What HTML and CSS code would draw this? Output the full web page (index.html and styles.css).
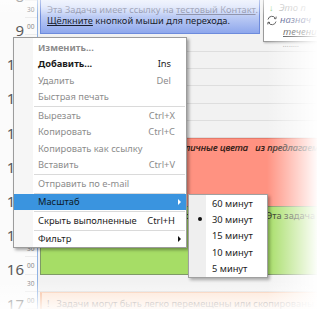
FILE: index.html
```html
<!DOCTYPE html>
<html lang="ru">
<head>
<meta charset="utf-8">
<title>Планировщик</title>
<link rel="stylesheet" href="styles.css">
</head>
<body>
<div class="screen">
  <div class="sched">
    <div class="times">
      <div class="hour"><div class="hr">8</div><div class="mn">00</div><div class="mn">30</div></div>
      <div class="hour"><div class="hr">9</div><div class="mn">00</div><div class="mn">30</div></div>
      <div class="hour"><div class="hr">10</div><div class="mn">00</div><div class="mn">30</div></div>
      <div class="hour"><div class="hr">11</div><div class="mn">00</div><div class="mn">30</div></div>
      <div class="hour"><div class="hr">12</div><div class="mn">00</div><div class="mn">30</div></div>
      <div class="hour"><div class="hr">13</div><div class="mn">00</div><div class="mn">30</div></div>
      <div class="hour"><div class="hr">14</div><div class="mn">00</div><div class="mn">30</div></div>
      <div class="hour"><div class="hr">15</div><div class="mn">00</div><div class="mn">30</div></div>
      <div class="hour"><div class="hr">16</div><div class="mn">00</div><div class="mn">30</div></div>
      <div class="hour"><div class="hr">17</div><div class="mn">00</div><div class="mn">30</div></div>
    </div>
    <div class="vline"></div>
    <div class="day">
      <div class="slot"></div><div class="slot"></div><div class="slot"></div><div class="slot"></div>
      <div class="slot"></div><div class="slot"></div><div class="slot"></div><div class="slot"></div>
      <div class="slot"></div><div class="slot"></div><div class="slot"></div><div class="slot"></div>
      <div class="slot"></div><div class="slot"></div><div class="slot"></div><div class="slot"></div>
      <div class="slot"></div><div class="slot"></div><div class="slot"></div><div class="slot"></div>

      <div class="ev ev-blue">
        <div class="faint">Эта Задача имеет ссылку на <u>тестовый Контакт</u>.</div>
        <div class="dark"><u>Щёлкните</u> кнопкой мыши для перехода.</div>
      </div>
      <div class="ev ev-red">Задачам можно назначать различные цвета &nbsp;&nbsp;из предлагаемых</div>
      <div class="ev ev-green">Задачи можно группировать по их категориям.&nbsp; Эта задача относится к категории</div>
      <div class="ev ev-orange"><span class="excl">!</span>Задачи могут быть легко перемещены или скопированы</div>
    </div>
  </div>

  <div class="card">
    <div class="card-row"><span class="down">↓</span><span class="c-faint">Это п</span></div>
    <div class="card-row"><svg class="recur" width="12" height="11" viewBox="0 0 12 11"><path d="M2 4.5 A4 4 0 0 1 9.5 3.5" fill="none" stroke="#555" stroke-width="1"/><path d="M10 6.5 A4 4 0 0 1 2.5 7.5" fill="none" stroke="#555" stroke-width="1"/><path d="M8 3.5 L10 3.8 L10.2 1.6" fill="none" stroke="#555" stroke-width="1"/><path d="M4 7.5 L2 7.2 L1.8 9.4" fill="none" stroke="#555" stroke-width="1"/></svg><span class="c-blue">назнач</span></div>
    <div class="card-row indent"><span class="c-dark">течени</span></div>
    <div class="card-row indent"><span class="c-dots">........</span></div>
  </div>

  <div class="menu">
    <div class="mi b dis">Изменить...</div>
    <div class="mi b">Добавить...<span class="sc sc-short">Ins</span></div>
    <div class="mi dis">Удалить<span class="sc sc-short">Del</span></div>
    <div class="mi dis">Быстрая печать</div>
    <div class="sep"></div>
    <div class="mi dis">Вырезать<span class="sc">Ctrl+X</span></div>
    <div class="mi dis">Копировать<span class="sc">Ctrl+C</span></div>
    <div class="mi dis">Копировать как ссылку</div>
    <div class="mi dis">Вставить<span class="sc">Ctrl+V</span></div>
    <div class="sep"></div>
    <div class="mi dis">Отправить по e-mail</div>
    <div class="sep"></div>
    <div class="mi hl">Масштаб<span class="arrow arrow-w"></span></div>
    <div class="sep"></div>
    <div class="mi">Скрыть выполненные<span class="sc">Ctrl+H</span></div>
    <div class="sep"></div>
    <div class="mi">Фильтр<span class="arrow"></span></div>
  </div>

  <div class="submenu">
    <div class="si">60 минут</div>
    <div class="si"><span class="bullet"></span>30 минут</div>
    <div class="si">15 минут</div>
    <div class="si">10 минут</div>
    <div class="si">5 минут</div>
  </div>

  <div class="fade fade-top"></div>
  <div class="fade fade-right"></div>
  <div class="fade fade-bottom"></div>
</div>
</body>
</html>
```

FILE: styles.css
```css
html, body {
  margin: 0;
  padding: 0;
  background: #fff;
}
.screen {
  position: relative;
  width: 317px;
  height: 309px;
  overflow: hidden;
  font-family: "Noto Sans", "Open Sans", sans-serif;
  background: #f2f2f2;
}
.sched {
  display: flex;
  margin-top: -16.1px;
}
.times {
  width: 37px;
  flex: none;
  background: #fbfbfb;
  display: flex;
  flex-direction: column;
}
.hour {
  height: 34.2px;
  display: grid;
  grid-template-columns: 25px 12px;
  grid-template-rows: 17.1px 17.1px;
}
.hr {
  grid-row: 1 / 3;
  grid-column: 1;
  text-align: right;
  font-size: 15px;
  line-height: 24px;
  color: #5a5a5a;
  padding-right: 1px;
}
.mn {
  grid-column: 2;
  font-size: 6.5px;
  line-height: 17px;
  color: #8a8a8a;
  padding-left: 2px;
  border-bottom: 1px solid #ececec;
  box-sizing: border-box;
}
.vline {
  width: 1px;
  flex: none;
  background: #8fb2e4;
}
.day {
  flex: 1;
  display: grid;
  grid-template-columns: 2px 222px 1fr;
  grid-template-rows: repeat(20, 17.1px);
}
.slot {
  grid-column: 1 / -1;
  border-bottom: 1px solid #dedede;
  box-sizing: border-box;
}
.ev {
  box-sizing: border-box;
  font-size: 9.3px;
  line-height: 11.5px;
  white-space: nowrap;
  overflow: hidden;
}
.ev-blue {
  grid-row: 1 / 4;
  grid-column: 2;
  margin: 0 2px 1px 0;
  border: 1px solid #6d8bdc;
  background: linear-gradient(#eef2fd 0%, #d9e2fa 45%, #8ea7ec 100%);
  padding: 19px 0 0 6px;
}
.faint { color: #8a8fa8; }
.dark { color: #1a1f2e; }
.ev-red {
  grid-row: 10 / 14;
  grid-column: 2 / 4;
  background: #ff9281;
  border-top: 1px solid #e57a6a;
  padding: 3px 0 0 6px;
  font-style: italic;
  color: #24140f;
  -webkit-text-stroke: 0.2px #24140f;
}
.ev-green {
  grid-row: 14 / 18;
  grid-column: 2 / 4;
  background: #a6dd66;
  border: 1px solid #7e9a66;
  border-right: none;
  padding: 3px 0 0 6px;
  color: #1e2a14;
}
.ev-orange {
  grid-row: 19 / 21;
  grid-column: 2 / 4;
  background: #fde3d1;
  border-left: 2px solid #f4b48e;
  border-top: 1px solid #f7c7aa;
  padding: 5px 0 0 5px;
  color: #8b7d78;
}
.excl { margin-right: 7px; }

.card {
  position: absolute;
  left: 263px;
  top: -2px;
  width: 70px;
  height: 44px;
  background: #fff;
  border: 1px solid #9a9a9a;
  box-shadow: 1px 1px 2px rgba(0,0,0,0.25);
  font-size: 9.5px;
  font-style: italic;
  line-height: 12px;
  padding: 3px 0 0 2px;
  box-sizing: border-box;
}
.card-row { display: flex; align-items: center; height: 12px; white-space: nowrap; }
.card-row.indent { padding-left: 17px; }
.down { color: #6cbf5a; font-style: normal; width: 10px; font-size: 9px; margin-left: 3px; }
.c-faint { color: #9a9a9a; }
.recur { margin-right: 2px; }
.c-blue { color: #30407a; }
.c-dark { color: #222; text-decoration: underline; }
.c-dots { color: #999; font-size: 8px; line-height: 6px; }

.menu {
  position: absolute;
  left: 13px;
  top: 37px;
  width: 174px;
  height: 211px;
  box-sizing: border-box;
  background: linear-gradient(to right, #f6f6f6 0, #f6f6f6 19px, #fff 19px);
  border: 1px solid #9c9c9c;
  box-shadow: 2px 2px 3px rgba(0,0,0,0.35);
  padding-top: 1px;
  font-size: 9.3px;
}
.mi {
  height: 16.5px;
  display: flex;
  align-items: center;
  padding-left: 24px;
  color: #1b1b1b;
  white-space: nowrap;
}
.mi.b { font-weight: 700; }
.mi.dis { color: #8c8c8c; }
.mi.hl { background: #3a94df; color: #0e1a28; }
.sc {
  margin-left: auto;
  margin-right: 11px;
  font-weight: 400;
}
.sc-short { margin-right: 15px; }
.arrow {
  margin-left: auto;
  margin-right: 5px;
  width: 0;
  height: 0;
  border-left: 3px solid #111;
  border-top: 3px solid transparent;
  border-bottom: 3px solid transparent;
}
.arrow-w { border-left-color: #fff; }
.sep {
  height: 1px;
  margin: 1px 1px 0 20px;
  background: #dadada;
}

.submenu {
  position: absolute;
  left: 188px;
  top: 194px;
  width: 80px;
  height: 84px;
  box-sizing: border-box;
  background: linear-gradient(to right, #efefef 0, #efefef 17px, #fff 17px);
  border: 1px solid #a0a0a0;
  box-shadow: 2px 2px 3px rgba(0,0,0,0.3);
  font-size: 9.3px;
}
.si {
  height: 16.4px;
  display: flex;
  align-items: center;
  padding-left: 23px;
  position: relative;
  color: #1b1b1b;
}
.bullet {
  position: absolute;
  left: 9px;
  top: 6px;
  width: 4px;
  height: 4px;
  border-radius: 50%;
  background: #111;
}

.fade { position: absolute; pointer-events: none; }
.fade-top {
  left: 0; top: 0; width: 317px; height: 16px;
  background: linear-gradient(rgba(255,255,255,0.55), rgba(255,255,255,0));
}
.fade-right {
  right: 0; top: 0; width: 50px; height: 309px;
  background: linear-gradient(to right, rgba(255,255,255,0), rgba(255,255,255,0.97));
}
.fade-bottom {
  left: 0; bottom: 0; width: 317px; height: 28px;
  background: linear-gradient(rgba(255,255,255,0), rgba(255,255,255,0.85));
}
```
